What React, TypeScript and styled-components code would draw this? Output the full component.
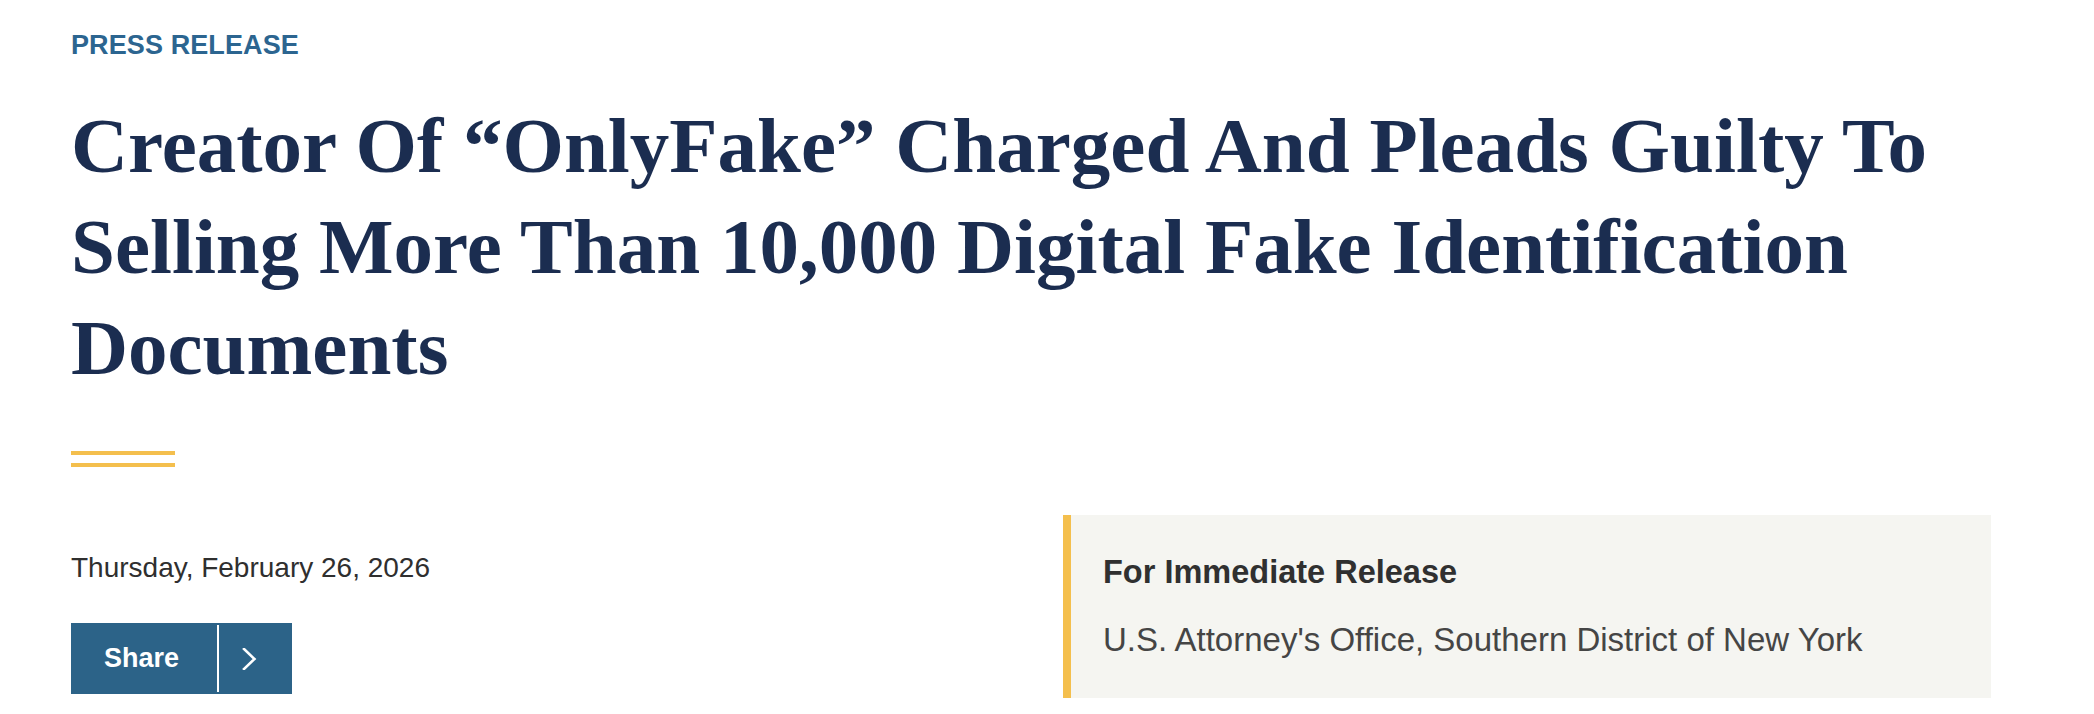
import React from 'react'
import styled, { createGlobalStyle } from 'styled-components'

const GlobalStyle = createGlobalStyle`
  html, body {
    margin: 0;
    padding: 0;
    background: #ffffff;
  }
  body {
    font-family: "Liberation Sans", Arial, sans-serif;
  }
`

const Page = styled.main`
  width: 1920px;
  padding: 29px 0 0 71px;
`

const Eyebrow = styled.div`
  font-family: "Liberation Sans", Arial, sans-serif;
  font-weight: 700;
  font-size: 27px;
  line-height: 32px;
  color: #2c6590;
  letter-spacing: 0.1px;
`

const Title = styled.h1`
  margin: 34px 0 0;
  max-width: 1960px;
  font-family: "Liberation Serif", "Times New Roman", serif;
  font-weight: 700;
  font-size: 79px;
  line-height: 101px;
  color: #1b2d50;
`

const Rule = styled.div`
  width: 104px;
  height: 4px;
  margin-top: 53px;
  border-top: 4px solid #f4bf4d;
  border-bottom: 4px solid #f4bf4d;
  padding-top: 4px;
  box-sizing: content-box;
`

const Row = styled.section`
  display: grid;
  grid-template-columns: 1fr 928px;
  margin-top: 48px;
  align-items: start;
`

const Meta = styled.div`
  display: flex;
  flex-direction: column;
  align-items: flex-start;
  padding-top: 33px;
`

const DateLine = styled.div`
  font-size: 28px;
  line-height: 40px;
  color: #2f2f2f;
`

const ShareButton = styled.button`
  display: flex;
  align-items: stretch;
  height: 71px;
  margin-top: 35px;
  padding: 0;
  border: 0;
  background: #2c6388;
  color: #ffffff;
  cursor: pointer;
`

const ShareLabel = styled.span`
  display: flex;
  align-items: center;
  width: 146px;
  box-sizing: border-box;
  padding-left: 33px;
  font-family: "Liberation Sans", Arial, sans-serif;
  font-weight: 700;
  font-size: 27px;
`

const Divider = styled.span`
  width: 2px;
  margin: 2px 0;
  background: #ffffff;
`

const ShareToggle = styled.span`
  display: flex;
  align-items: center;
  width: 73px;
  box-sizing: border-box;
  padding-left: 23px;
`

const ReleaseBox = styled.aside`
  background: #f5f5f1;
  border-left: 8px solid #f4bf4d;
  padding: 37px 32px 0;
  height: 183px;
  box-sizing: border-box;
`

const ReleaseHeading = styled.div`
  font-weight: 700;
  font-size: 32.5px;
  line-height: 40px;
  color: #303030;
`

const ReleaseOffice = styled.div`
  margin-top: 28px;
  font-size: 33px;
  line-height: 40px;
  color: #454545;
`

const Chevron = () => (
  <svg width="15" height="22" viewBox="0 0 15 22" fill="none">
    <polyline
      points="2,1 12.5,11 2,21"
      stroke="#ffffff"
      strokeWidth="2.6"
      strokeLinecap="square"
      strokeLinejoin="miter"
    />
  </svg>
)

export default function App() {
  return (
    <>
      <GlobalStyle />
      <Page>
        <Eyebrow>PRESS RELEASE</Eyebrow>
        <Title>
          Creator Of “OnlyFake” Charged And Pleads Guilty To Selling More Than 10,000 Digital Fake
          Identification Documents
        </Title>
        <Rule />
        <Row>
          <Meta>
            <DateLine>Thursday, February 26, 2026</DateLine>
            <ShareButton>
              <ShareLabel>Share</ShareLabel>
              <Divider />
              <ShareToggle>
                <Chevron />
              </ShareToggle>
            </ShareButton>
          </Meta>
          <ReleaseBox>
            <ReleaseHeading>For Immediate Release</ReleaseHeading>
            <ReleaseOffice>U.S. Attorney's Office, Southern District of New York</ReleaseOffice>
          </ReleaseBox>
        </Row>
      </Page>
    </>
  )
}
